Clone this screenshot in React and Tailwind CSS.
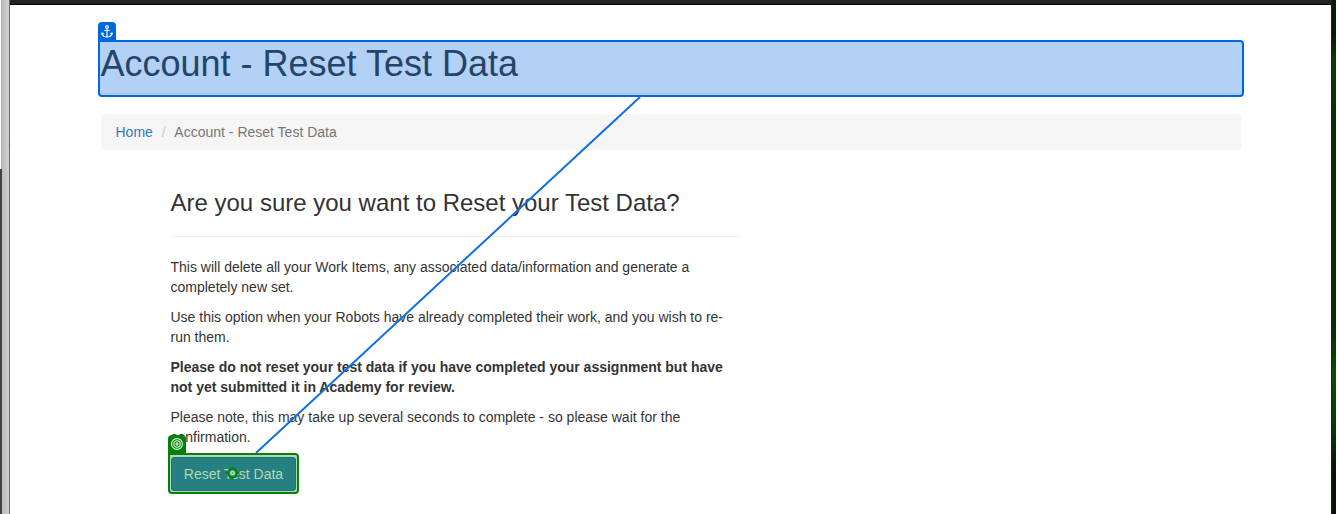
import React from 'react';

function AnchorTag() {
  return (
    <span className="absolute -left-0.5 -top-5 flex h-5 w-[18px] items-start justify-center rounded-t-[4px] bg-[#0067df] pt-[3px]">
      <svg width="12" height="13" viewBox="0 0 12 13" fill="none" stroke="#fff" strokeWidth="1.150">
        <circle cx="6" cy="2" r="1.400" />
        <path d="M6 3.400V12M3.300 5.500H8.700M1 8C1.300 10.500 3.300 12 6 12S10.700 10.500 11 8M0.300 9.500L1.100 8L2.800 8.800M9.200 8.800L10.900 8L11.700 9.500" />
      </svg>
    </span>
  );
}

function TargetTag() {
  return (
    <span className="absolute -left-0.5 -top-5 flex h-5 w-[18px] items-start justify-center rounded-t-[4px] bg-[#038108] pt-[3px]">
      <svg width="12" height="12" viewBox="0 0 12 12" fill="none" stroke="#e4f3e4" strokeWidth="1.100">
        <circle cx="6" cy="6" r="5.400" />
        <circle cx="6" cy="6" r="3.200" />
        <circle cx="6" cy="6" r="1.100" />
      </svg>
    </span>
  );
}

function ClickPoint() {
  return (
    <svg className="absolute left-[56px] top-[11px]" width="14" height="14" viewBox="0 0 14 14" fill="none" stroke="#038108">
      <circle cx="6.500" cy="7" r="4.500" fill="#267f81" strokeWidth="1.800" />
      <circle cx="6.500" cy="7" r="2.500" fill="#b2d8b8" stroke="none" />
      <circle cx="6.500" cy="7" r="0.900" fill="#5fae77" stroke="none" />
      <path d="M6.500 0.500V2.500M6.500 11.500V13.500M0 7H2M11 7H13" strokeWidth="1.400" />
    </svg>
  );
}

export default function App() {
  return (
    <div className="relative flex h-[514px] w-[1337px] overflow-hidden bg-white font-['Liberation_Sans',Arial,sans-serif] text-sm leading-5 text-[#333]">
      <aside className="flex w-[10px] shrink-0">
        <div className="flex w-0.5 flex-col">
          <div className="h-[169px] border-r border-[#aaa] bg-white" />
          <div className="flex-1 bg-[#444]" />
        </div>
        <div className="w-[7px] bg-linear-to-r from-[#bcbcbc] to-[#cfcfcf]" />
        <div className="flex w-px flex-col bg-[#6d6d6d] pt-[142px]">
          <div className="h-[7px] bg-[#6a6a20]" />
        </div>
      </aside>

      <main className="flex w-[1321px] shrink-0 flex-col">
        <div className="h-[5px] shrink-0 border-b border-black bg-[#222]" />
        <div className="ml-[88px] mt-[35px] w-[1146px]">
          <header className="relative h-[57px] rounded-[4px] rounded-tl-none border-2 border-[#0067df] bg-[#b3d1f5]">
            <AnchorTag />
            <h1 className="h-[53px] pl-[0.5px] pt-0.5 text-[36px] leading-[40px] text-[#244469]">Account - Reset Test Data</h1>
            <div className="absolute inset-x-0 bottom-px h-px bg-[#a8c6e9]" />
          </header>

          <nav className="ml-[3px] mt-[17px] flex h-9 w-[1140px] items-center rounded-[4px] bg-[#f5f5f5] px-[14.5px] text-[#777]">
            <a className="text-[#337ab7]">Home</a>
            <span className="w-[21.5px] text-center text-[#ccc]">/</span>
            <span>Account - Reset Test Data</span>
          </nav>

          <section className="ml-[72.5px] w-[570px] pt-10">
            <h3 className="h-[46px] text-2xl leading-[26px]">Are you sure you want to Reset your Test Data?</h3>
            <hr className="mb-5 border-[#eee]" />
            <p className="mb-2.5">This will delete all your Work Items, any associated data/information and generate a<br />completely new set.</p>
            <p className="mb-2.5">Use this option when your Robots have already completed their work, and you wish to re-<br />run them.</p>
            <p className="mb-2.5 font-bold">Please do not reset your test data if you have completed your assignment but have<br />not yet submitted it in Academy for review.</p>
            <p>Please note, this may take up several seconds to complete - so please wait for the<br />confirmation.</p>
            <div className="relative -ml-[2.5px] mt-1.5 flex h-[41px] w-[131px] rounded-[4px] rounded-tl-none border-2 border-[#038108] bg-[#b2d8b3] pb-px pl-px pr-px pt-[2px]">
              <TargetTag />
              <button className="flex-1 whitespace-nowrap rounded-[3px] border border-[#237078] bg-[#267f81] text-sm text-[#b2d9b5]">Reset Test Data</button>
              <ClickPoint />
            </div>
          </section>
        </div>
      </main>

      <div className="w-[5px] shrink-0 border-l border-[#222] bg-[linear-gradient(to_bottom,#071b04_0px,#071b04_35px,#0b3b06_60px,#0c2c05_120px,#0c2c05_330px,#0d4c08_375px,#0b3507_430px,#061504_470px,#061504_514px)]" />
      <svg className="pointer-events-none absolute inset-0" width="1337" height="514">
        <line x1="640" y1="97" x2="256" y2="453" stroke="#1070e3" strokeWidth="2" />
      </svg>
    </div>
  );
}
